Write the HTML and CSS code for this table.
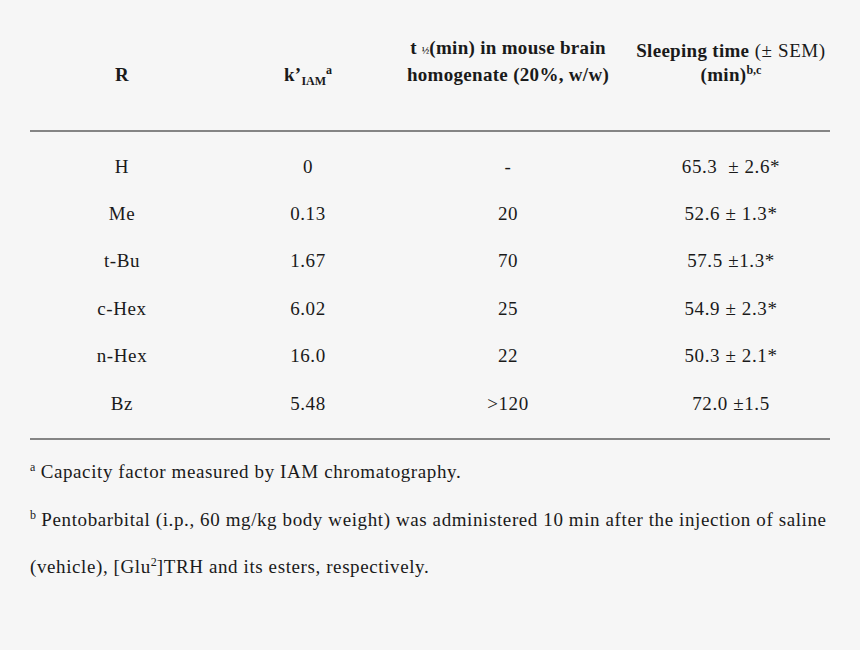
FILE: index.html
```html
<!DOCTYPE html>
<html>
<head>
<meta charset="utf-8">
<link rel="stylesheet" href="styles.css">
</head>
<body>
<div class="page">
  <div class="head">
    <div class="c c1"><b>R</b></div>
    <div class="c c2"><b>k’<sub>IAM</sub><sup>a</sup></b></div>
    <div class="c c3"><b>t <span class="half">½</span>(min) in mouse brain<br>homogenate (20%, w/w)</b></div>
    <div class="c c4"><b>Sleeping time</b> (± SEM)<br><b>(min)<sup>b,c</sup></b></div>
  </div>
  <div class="body">
    <div class="row"><div class="c c1">H</div><div class="c c2">0</div><div class="c c3">-</div><div class="c c4">65.3&nbsp; ± 2.6*</div></div>
    <div class="row"><div class="c c1">Me</div><div class="c c2">0.13</div><div class="c c3">20</div><div class="c c4">52.6 ± 1.3*</div></div>
    <div class="row"><div class="c c1">t-Bu</div><div class="c c2">1.67</div><div class="c c3">70</div><div class="c c4">57.5 ±1.3*</div></div>
    <div class="row"><div class="c c1">c-Hex</div><div class="c c2">6.02</div><div class="c c3">25</div><div class="c c4">54.9 ± 2.3*</div></div>
    <div class="row"><div class="c c1">n-Hex</div><div class="c c2">16.0</div><div class="c c3">22</div><div class="c c4">50.3 ± 2.1*</div></div>
    <div class="row"><div class="c c1">Bz</div><div class="c c2">5.48</div><div class="c c3">&gt;120</div><div class="c c4">72.0 ±1.5</div></div>
  </div>
  <div class="notes">
    <p><sup>a</sup> Capacity factor measured by IAM chromatography.</p>
    <p><sup>b</sup> Pentobarbital (i.p., 60 mg/kg body weight) was administered 10 min after the injection of saline</p>
    <p>(vehicle), [Glu<sup>2</sup>]TRH and its esters, respectively.</p>
  </div>
</div>
</body>
</html>
```
FILE: styles.css
```css
html, body {
  margin: 0;
  padding: 0;
  background: #f6f6f6;
}
body {
  font-family: "Liberation Serif", "Times New Roman", serif;
  font-size: 19px;
  letter-spacing: 0.6px;
  color: #1a1a1a;
}
.page {
  width: 800px;
  padding: 36px 30px 0 30px;
}
.head, .row {
  display: flex;
}
.head {
  align-items: flex-end;
  line-height: 24px;
  padding-bottom: 43px;
  border-bottom: 2px solid #858585;
}
.head b {
  letter-spacing: 0.3px;
}
.c {
  text-align: center;
  white-space: nowrap;
}
.c1 { width: 184px; }
.c2 { width: 188px; }
.c3 { width: 212px; }
.c4 { width: 198px; padding-left: 18px; }
sub, sup {
  font-size: 12px;
  line-height: 0;
  letter-spacing: 0;
}
sub { vertical-align: -4px; }
sup { vertical-align: 7px; }
.half {
  font-size: 10px;
  letter-spacing: 0;
}
.body {
  padding: 11px 0 11px;
  border-bottom: 2px solid #858585;
}
.row {
  height: 47.4px;
  align-items: center;
}
.notes p {
  margin: 0;
  line-height: 47.5px;
  white-space: nowrap;
}
.notes {
  padding-top: 8px;
}
.notes sup {
  font-size: 12px;
  vertical-align: 7px;
}
```
